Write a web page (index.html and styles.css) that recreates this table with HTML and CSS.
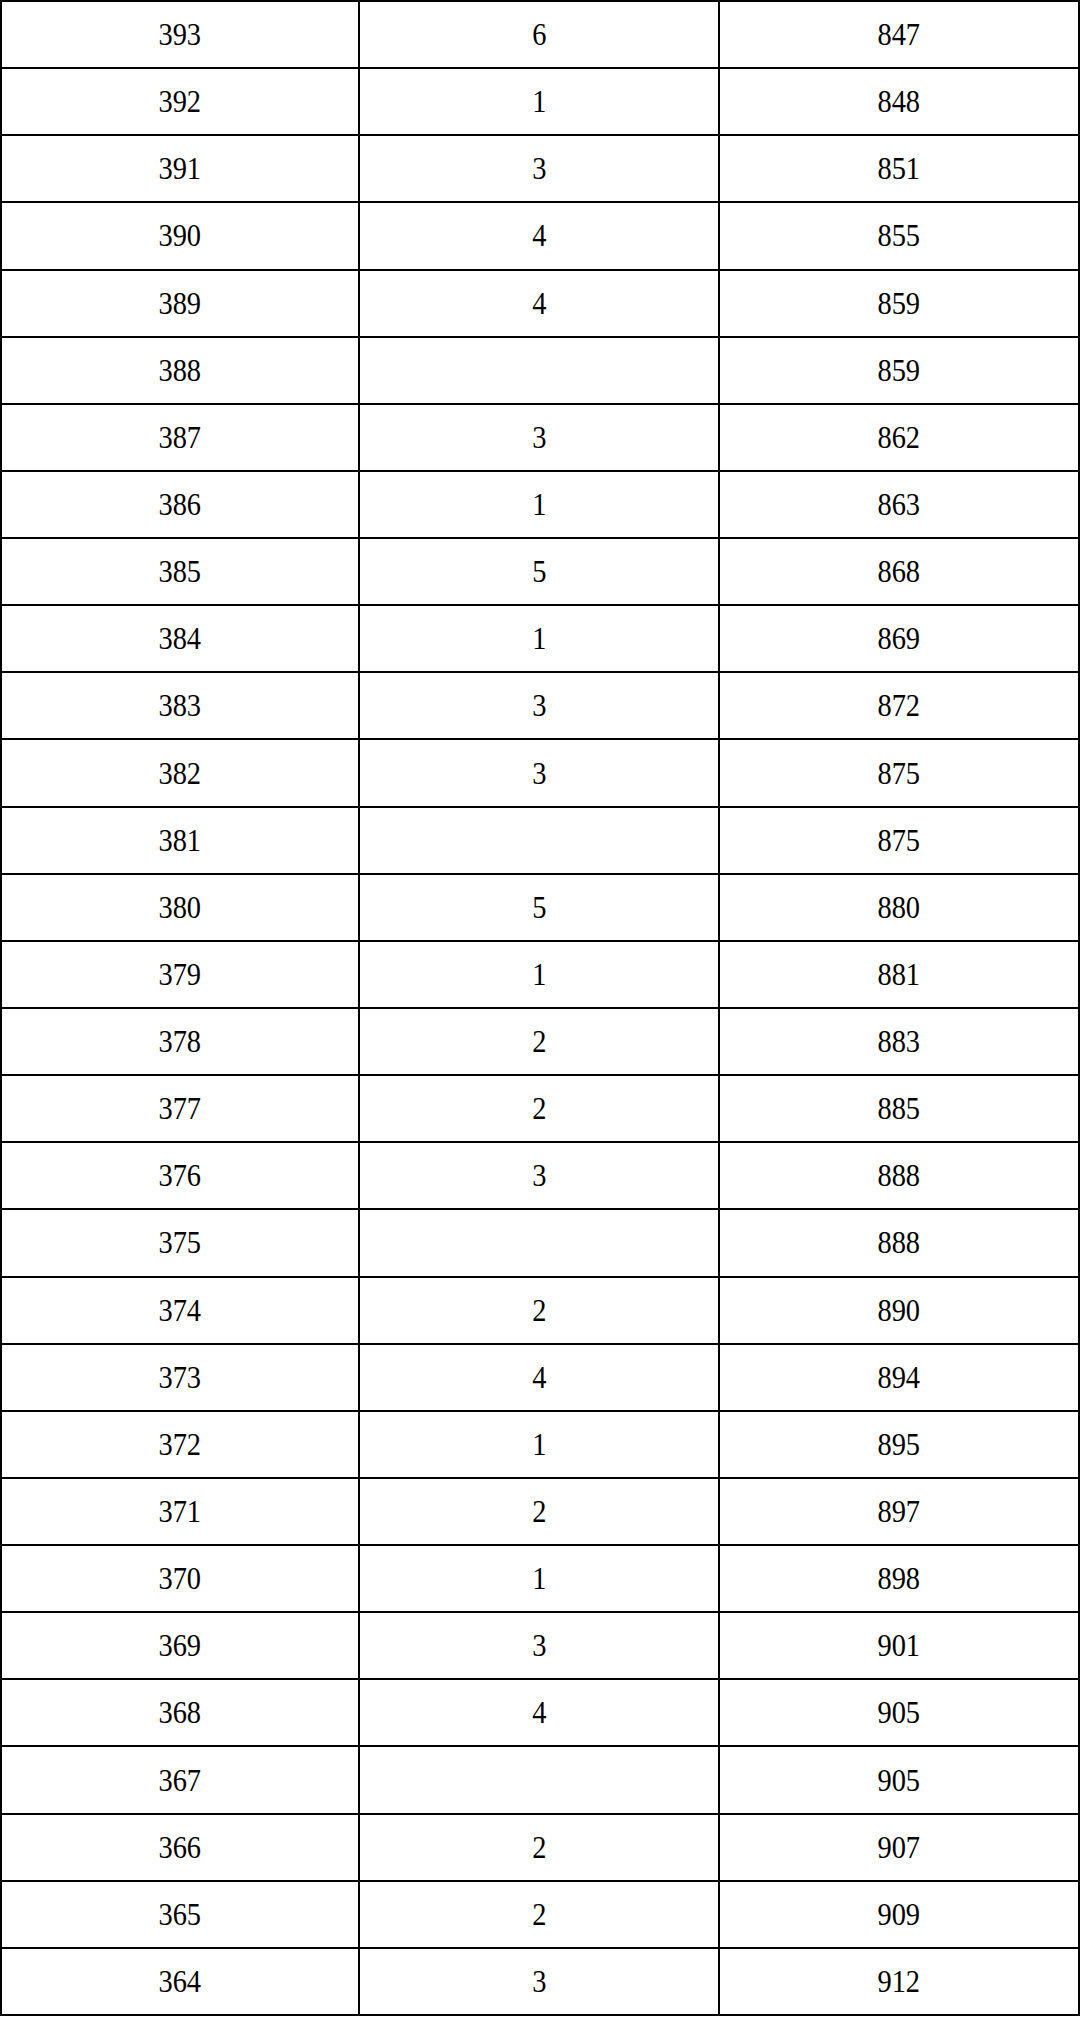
FILE: index.html
```html
<!DOCTYPE html>
<html>
<head>
<meta charset="utf-8">
<link rel="stylesheet" href="styles.css">
</head>
<body>
<div class="table">
<div class="cell"><span>393</span></div><div class="cell"><span>6</span></div><div class="cell"><span>847</span></div>
<div class="cell"><span>392</span></div><div class="cell"><span>1</span></div><div class="cell"><span>848</span></div>
<div class="cell"><span>391</span></div><div class="cell"><span>3</span></div><div class="cell"><span>851</span></div>
<div class="cell"><span>390</span></div><div class="cell"><span>4</span></div><div class="cell"><span>855</span></div>
<div class="cell"><span>389</span></div><div class="cell"><span>4</span></div><div class="cell"><span>859</span></div>
<div class="cell"><span>388</span></div><div class="cell"></div><div class="cell"><span>859</span></div>
<div class="cell"><span>387</span></div><div class="cell"><span>3</span></div><div class="cell"><span>862</span></div>
<div class="cell"><span>386</span></div><div class="cell"><span>1</span></div><div class="cell"><span>863</span></div>
<div class="cell"><span>385</span></div><div class="cell"><span>5</span></div><div class="cell"><span>868</span></div>
<div class="cell"><span>384</span></div><div class="cell"><span>1</span></div><div class="cell"><span>869</span></div>
<div class="cell"><span>383</span></div><div class="cell"><span>3</span></div><div class="cell"><span>872</span></div>
<div class="cell"><span>382</span></div><div class="cell"><span>3</span></div><div class="cell"><span>875</span></div>
<div class="cell"><span>381</span></div><div class="cell"></div><div class="cell"><span>875</span></div>
<div class="cell"><span>380</span></div><div class="cell"><span>5</span></div><div class="cell"><span>880</span></div>
<div class="cell"><span>379</span></div><div class="cell"><span>1</span></div><div class="cell"><span>881</span></div>
<div class="cell"><span>378</span></div><div class="cell"><span>2</span></div><div class="cell"><span>883</span></div>
<div class="cell"><span>377</span></div><div class="cell"><span>2</span></div><div class="cell"><span>885</span></div>
<div class="cell"><span>376</span></div><div class="cell"><span>3</span></div><div class="cell"><span>888</span></div>
<div class="cell"><span>375</span></div><div class="cell"></div><div class="cell"><span>888</span></div>
<div class="cell"><span>374</span></div><div class="cell"><span>2</span></div><div class="cell"><span>890</span></div>
<div class="cell"><span>373</span></div><div class="cell"><span>4</span></div><div class="cell"><span>894</span></div>
<div class="cell"><span>372</span></div><div class="cell"><span>1</span></div><div class="cell"><span>895</span></div>
<div class="cell"><span>371</span></div><div class="cell"><span>2</span></div><div class="cell"><span>897</span></div>
<div class="cell"><span>370</span></div><div class="cell"><span>1</span></div><div class="cell"><span>898</span></div>
<div class="cell"><span>369</span></div><div class="cell"><span>3</span></div><div class="cell"><span>901</span></div>
<div class="cell"><span>368</span></div><div class="cell"><span>4</span></div><div class="cell"><span>905</span></div>
<div class="cell"><span>367</span></div><div class="cell"></div><div class="cell"><span>905</span></div>
<div class="cell"><span>366</span></div><div class="cell"><span>2</span></div><div class="cell"><span>907</span></div>
<div class="cell"><span>365</span></div><div class="cell"><span>2</span></div><div class="cell"><span>909</span></div>
<div class="cell"><span>364</span></div><div class="cell"><span>3</span></div><div class="cell"><span>912</span></div>
</div>
</body>
</html>
```

FILE: styles.css
```css
html, body {
  margin: 0;
  padding: 0;
  background: #ffffff;
}
.table {
  box-sizing: border-box;
  width: 1080px;
  height: 2016px;
  display: grid;
  grid-template-columns: 358px 360px 360px;
  grid-template-rows: repeat(30, 1fr);
  border-left: 2px solid #000;
  border-top: 2px solid #000;
  font-family: "Liberation Serif", "Times New Roman", serif;
  font-size: 29px;
  color: #000;
}
.cell {
  box-sizing: border-box;
  border-right: 2px solid #000;
  border-bottom: 2px solid #000;
  display: flex;
  align-items: center;
  justify-content: center;
}
.cell span {
  display: inline-block;
  line-height: 1;
  transform: scale(0.98, 1.12);
  transform-origin: center;
}
```
